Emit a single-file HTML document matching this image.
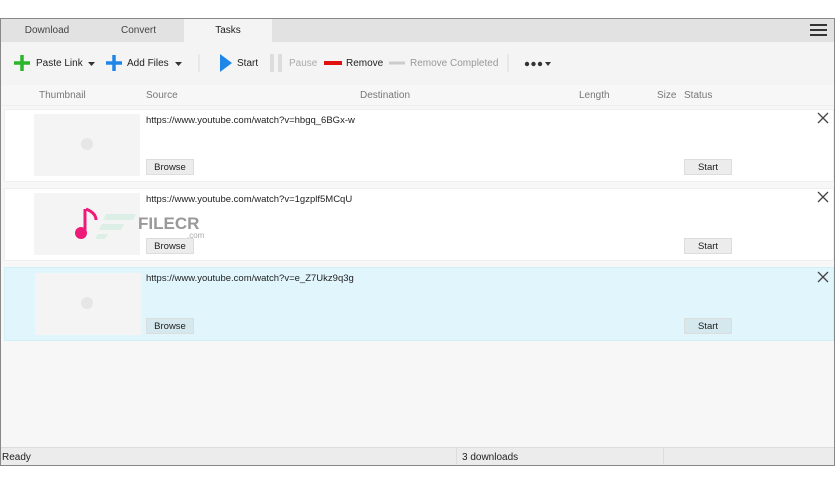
<!DOCTYPE html>
<html><head><style>
body{margin:0;width:836px;height:484px;background:#fff;font-family:"Liberation Sans",sans-serif;font-size:10px;color:#222;position:relative;overflow:hidden}
.a{position:absolute}
.win{left:0;top:18px;width:833px;height:446px;border:1px solid #888;background:#f7f7f7}
.tabs{left:1px;top:19px;width:833px;height:23px;background:#e2e2e2}
.tab{top:19px;height:23px;line-height:24px;text-align:center;color:#444}
.tb{left:1px;top:42px;width:833px;height:43px;background:#f4f4f4}
.hdr{left:1px;top:85px;width:833px;height:20px;background:#f7f7f7;color:#777;line-height:21px;border-bottom:1px solid #eee}
.row{left:4px;width:828px;height:71px;background:#fff;border:1px solid #eee}
.th{width:106px;height:62px;background:#f4f4f4}
.dot{width:12px;height:12px;border-radius:6px;background:#e6e6e6}
.btn{width:46px;height:14px;background:#ececec;border:1px solid #ddd;text-align:center;line-height:15px;font-size:9.5px}
.url{font-size:9.5px;color:#222}
</style></head><body>
<div class="a win"></div>
<div class="a tabs"></div>
<div class="a tab" style="left:1px;width:92px">Download</div>
<div class="a tab" style="left:93px;width:91px">Convert</div>
<div class="a tab" style="left:184px;width:88px;background:#f4f4f4;color:#222">Tasks</div>
<div class="a" style="left:810px;top:24px;width:17px;height:2px;background:#333;box-shadow:0 5px 0 #333,0 10px 0 #333"></div>
<div class="a tb"></div>
<svg class="a" style="left:0;top:42px" width="560" height="43">
<path d="M22 13v16M14 21h16" stroke="#2ab52a" stroke-width="3.5"/>
<path d="M88 20h7l-3.5 4z" fill="#333"/>
<path d="M114 13v16M106 21h16" stroke="#1f86e8" stroke-width="3.5"/>
<path d="M175 20h7l-3.5 4z" fill="#333"/>
<path d="M199 12v18" stroke="#ddd"/>
<path d="M220 12l12 9-12 9z" fill="#1f86e8"/>
<path d="M272 12v18M280 12v18" stroke="#ddd" stroke-width="4"/>
<path d="M324 21h18" stroke="#e01010" stroke-width="4"/>
<path d="M389 21h16" stroke="#ccc" stroke-width="3"/>
<path d="M508 12v18" stroke="#ddd"/>
<circle cx="527" cy="22" r="2.2" fill="#333"/><circle cx="533.5" cy="22" r="2.2" fill="#333"/><circle cx="540" cy="22" r="2.2" fill="#333"/>
<path d="M545 20h6l-3 4z" fill="#333"/>
</svg>
<div class="a" style="left:36px;top:58px">Paste Link</div>
<div class="a" style="left:127px;top:58px">Add Files</div>
<div class="a" style="left:237px;top:58px">Start</div>
<div class="a" style="left:289px;top:58px;color:#aaa">Pause</div>
<div class="a" style="left:346px;top:58px">Remove</div>
<div class="a" style="left:410px;top:58px;color:#999">Remove Completed</div>
<div class="a hdr"><span class="a" style="left:38px">Thumbnail</span><span class="a" style="left:145px">Source</span><span class="a" style="left:359px">Destination</span><span class="a" style="left:578px">Length</span><span class="a" style="left:656px">Size</span><span class="a" style="left:683px">Status</span></div>

<div class="a row" style="top:109px"></div>
<div class="a th" style="left:34px;top:114px"></div><div class="a dot" style="left:81px;top:138px"></div>
<div class="a url" style="left:146px;top:115px">https://www.youtube.com/watch?v=hbgq_6BGx-w</div>
<div class="a btn" style="left:146px;top:159px">Browse</div>
<div class="a btn" style="left:684px;top:159px">Start</div>

<div class="a row" style="top:188px"></div>
<div class="a th" style="left:34px;top:193px"></div>
<svg class="a" style="left:72px;top:206px" width="140" height="40"><path d="M13 3v24" stroke="#ee1a77" stroke-width="3"/><circle cx="9" cy="27" r="6" fill="#ee1a77"/><path d="M14 3c5 2 10 5 10 11" stroke="#ee1a77" stroke-width="3" fill="none"/>
<path d="M34 8h30l-3 6h-30zM30 18h22l-3 6h-22zM26 28h10l-3 5h-10z" fill="#dcefe6"/>
<text x="66" y="23" font-family="Liberation Sans" font-weight="bold" font-size="17" fill="#999">FILECR</text><text x="115" y="32" font-family="Liberation Sans" font-size="8" fill="#aaa">.com</text></svg>
<div class="a url" style="left:146px;top:194px">https://www.youtube.com/watch?v=1gzplf5MCqU</div>
<div class="a btn" style="left:146px;top:238px">Browse</div>
<div class="a btn" style="left:684px;top:238px">Start</div>

<div class="a row" style="top:267px;background:#e1f6fc;border-color:#d4eef5;height:72px"></div>
<div class="a th" style="left:35px;top:273px"></div><div class="a dot" style="left:81px;top:297px"></div>
<div class="a url" style="left:146px;top:273px">https://www.youtube.com/watch?v=e_Z7Ukz9q3g</div>
<div class="a btn" style="left:146px;top:318px;background:#d4e8ee">Browse</div>
<div class="a btn" style="left:684px;top:318px;background:#d4e8ee">Start</div>

<svg class="a" style="left:0;top:0" width="836" height="484"><path d="M818 113l10 10M828 113l-10 10M818 192l10 10M828 192l-10 10M818 272l10 10M828 272l-10 10" stroke="#444" stroke-width="1.3"/></svg>

<div class="a" style="left:1px;top:447px;width:833px;height:17px;background:#ececec;border-top:1px solid #ddd"></div>
<div class="a" style="left:2px;top:452px">Ready</div>
<div class="a" style="left:456px;top:448px;height:16px;border-left:1px solid #ddd"></div>
<div class="a" style="left:462px;top:452px">3 downloads</div>
<div class="a" style="left:663px;top:448px;height:16px;border-left:1px solid #ddd"></div>
</body></html>
